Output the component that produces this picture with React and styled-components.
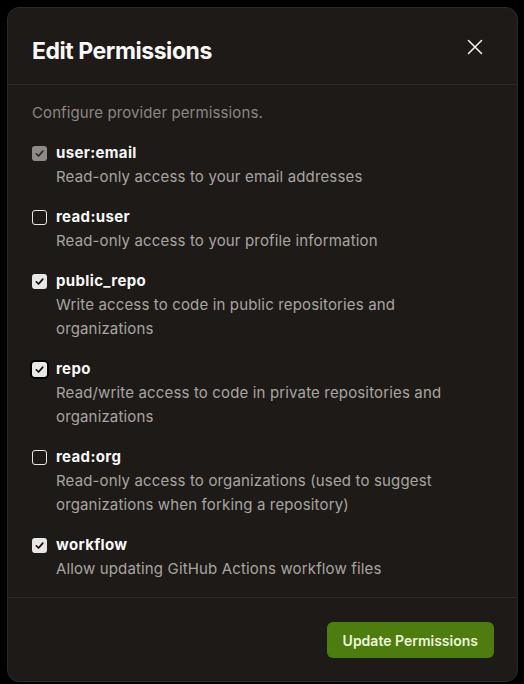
import styled, { createGlobalStyle } from "styled-components";

const GlobalStyle = createGlobalStyle`
  html, body {
    margin: 0;
    padding: 0;
    background: #000;
  }
  body {
    font-family: Inter, "Noto Sans", sans-serif;
    -webkit-font-smoothing: antialiased;
  }
`;

const Backdrop = styled.div`
  width: 524px;
  height: 684px;
  padding: 7px 0 0 7px;
  box-sizing: border-box;
  background: #000;
`;

const Modal = styled.div`
  width: 511px;
  box-sizing: border-box;
  background: #1d1a18;
  border: 1px solid #2b2826;
  border-radius: 12px;
  display: flex;
  flex-direction: column;
  color: #f5f5f4;
`;

const Header = styled.div`
  display: flex;
  align-items: center;
  justify-content: space-between;
  padding: 27px 28px 17px 24px;
  border-bottom: 1px solid #2d2a27;
`;

const Title = styled.h2`
  margin: 0;
  font-size: 23px;
  line-height: 32px;
  font-weight: 700;
  letter-spacing: -0.45px;
  color: #f8f8f7;
`;

const CloseButton = styled.button`
  width: 28px;
  height: 28px;
  margin-top: -8px;
  display: flex;
  align-items: center;
  justify-content: center;
  background: none;
  border: none;
  padding: 0;
  color: #f5f5f4;
  cursor: pointer;
`;

const Body = styled.div`
  padding: 16px 24px 16px 24px;
  display: flex;
  flex-direction: column;
  gap: 16px;
`;

const Intro = styled.p`
  margin: 0;
  font-size: 15px;
  line-height: 24px;
  letter-spacing: 0.1px;
  color: #8c8782;
`;

const Item = styled.div`
  display: grid;
  grid-template-columns: 16px 1fr;
  column-gap: 8px;
  align-items: center;
`;

const Box = styled.span`
  width: 15px;
  height: 15px;
  box-sizing: border-box;
  border-radius: 3px;
  display: flex;
  align-items: center;
  justify-content: center;
  background: ${(p) =>
    p.$disabled ? "#8d8a87" : p.$checked ? "#e9e7e5" : "transparent"};
  border: ${(p) => (p.$checked ? "none" : "1.5px solid #e9e7e5")};
  color: ${(p) => (p.$disabled ? "#2a2826" : "#0c0a09")};
  ${(p) => p.$focused && `box-shadow: 0 0 0 2px #000;`}
`;

const Label = styled.span`
  font-size: 15px;
  line-height: 24px;
  font-weight: 700;
  letter-spacing: 0.35px;
  color: #f8f8f7;
`;

const Description = styled.p`
  grid-column: 2;
  max-width: 404px;
  margin: 0;
  font-size: 15px;
  line-height: 24px;
  letter-spacing: 0.15px;
  color: #a9a5a1;
`;

const Footer = styled.div`
  display: flex;
  justify-content: flex-end;
  padding: 24px 23px 23px;
  border-top: 1px solid #2d2a27;
`;

const PrimaryButton = styled.button`
  height: 36px;
  padding: 0 16px;
  border: none;
  border-radius: 6px;
  background: #4d7c0f;
  color: #ecf5dc;
  font-family: Inter, "Noto Sans", sans-serif;
  font-size: 14px;
  font-weight: 600;
  cursor: pointer;
`;

const permissions = [
  {
    id: "user:email",
    description: "Read-only access to your email addresses",
    checked: true,
    disabled: true,
  },
  {
    id: "read:user",
    description: "Read-only access to your profile information",
    checked: false,
  },
  {
    id: "public_repo",
    description: "Write access to code in public repositories and organizations",
    checked: true,
  },
  {
    id: "repo",
    description: "Read/write access to code in private repositories and organizations",
    checked: true,
    focused: true,
  },
  {
    id: "read:org",
    description:
      "Read-only access to organizations (used to suggest organizations when forking a repository)",
    checked: false,
  },
  {
    id: "workflow",
    description: "Allow updating GitHub Actions workflow files",
    checked: true,
  },
];

function Check() {
  return (
    <svg width="11" height="11" viewBox="0 0 12 12" fill="none">
      <path
        d="M2.5 6.3 5 8.7 9.6 3.4"
        stroke="currentColor"
        strokeWidth="1.8"
        strokeLinecap="round"
        strokeLinejoin="round"
      />
    </svg>
  );
}

function CloseIcon() {
  return (
    <svg width="16" height="16" viewBox="0 0 16 16" fill="none">
      <path
        d="M1.5 1.5 14.5 14.5M14.5 1.5 1.5 14.5"
        stroke="currentColor"
        strokeWidth="1.5"
        strokeLinecap="round"
      />
    </svg>
  );
}

function PermissionItem({ permission }) {
  return (
    <Item>
      <Box
        $checked={permission.checked}
        $disabled={permission.disabled}
        $focused={permission.focused}
      >
        {permission.checked && <Check />}
      </Box>
      <Label>{permission.id}</Label>
      <Description>{permission.description}</Description>
    </Item>
  );
}

export default function App() {
  return (
    <>
      <GlobalStyle />
      <Backdrop>
        <Modal>
          <Header>
            <Title>Edit Permissions</Title>
            <CloseButton aria-label="Close">
              <CloseIcon />
            </CloseButton>
          </Header>
          <Body>
            <Intro>Configure provider permissions.</Intro>
            {permissions.map((p) => (
              <PermissionItem key={p.id} permission={p} />
            ))}
          </Body>
          <Footer>
            <PrimaryButton>Update Permissions</PrimaryButton>
          </Footer>
        </Modal>
      </Backdrop>
    </>
  );
}
